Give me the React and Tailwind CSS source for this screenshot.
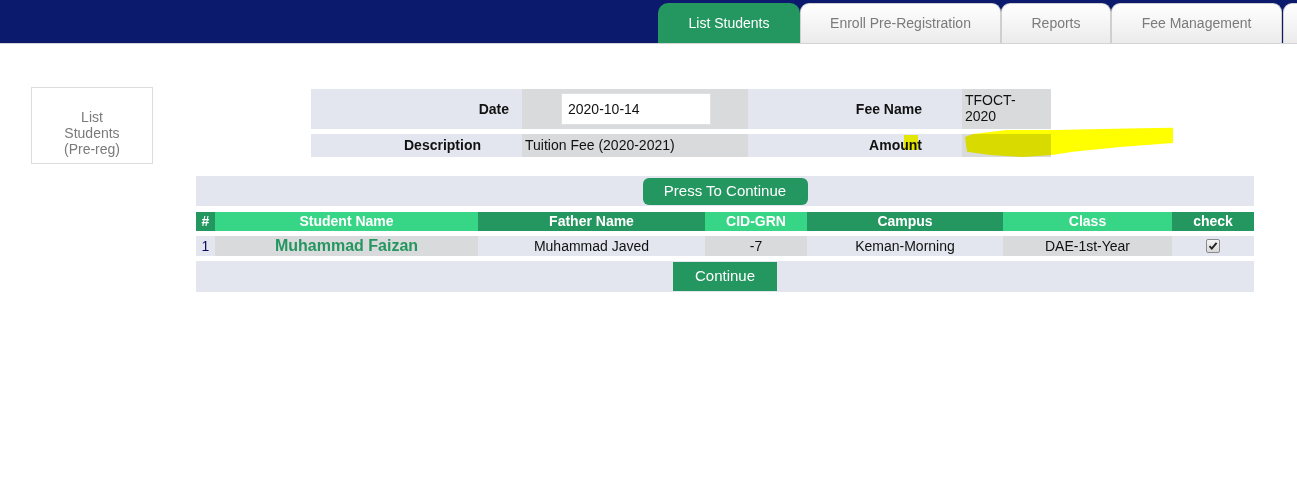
import React from "react";

const light = "bg-[#e3e6ee]";
const gray = "bg-[#d9dadb]";

function Tab({ children, active, w }) {
  if (active) {
    return (
      <div className={`${w} h-[40px] shrink-0 flex items-center justify-center rounded-t-[10px] bg-[#24965f] text-white text-[14px]`}>
        {children}
      </div>
    );
  }
  return (
    <div className={`${w} h-[40px] shrink-0 flex items-center justify-center rounded-t-[9px] border border-b-0 border-[#cfcfcf] bg-gradient-to-b from-white to-[#ebebeb] text-[#7b7b7b] text-[14px]`}>
      {children}
    </div>
  );
}

function CheckBox() {
  return (
    <span className="w-[14px] h-[14px] rounded-[2px] border border-[#8a8a8a] bg-gradient-to-b from-[#f4f4f4] to-[#d8d8d8] flex items-center justify-center">
      <svg width="10" height="10" viewBox="0 0 10 10">
        <path d="M1.5 5.2 L3.8 7.6 L8.6 1.8" fill="none" stroke="#222" strokeWidth="1.9" />
      </svg>
    </span>
  );
}

export default function App() {
  const cols = [
    { name: "#", w: "w-[19px]", head: "bg-[#24965f]", cell: light, val: "1", cls: "text-[#0a0a60]" },
    { name: "Student Name", w: "w-[263px]", head: "bg-[#37d586]", cell: gray, val: "Muhammad Faizan", cls: "font-bold text-[16px] text-[#24965f]" },
    { name: "Father Name", w: "w-[227px]", head: "bg-[#24965f]", cell: light, val: "Muhammad Javed", cls: "" },
    { name: "CID-GRN", w: "w-[102px]", head: "bg-[#37d586]", cell: gray, val: "-7", cls: "" },
    { name: "Campus", w: "w-[196px]", head: "bg-[#24965f]", cell: light, val: "Keman-Morning", cls: "" },
    { name: "Class", w: "w-[169px]", head: "bg-[#37d586]", cell: gray, val: "DAE-1st-Year", cls: "" },
    { name: "check", w: "w-[82px]", head: "bg-[#24965f]", cell: light, val: null, cls: "" },
  ];

  return (
    <div className="relative w-[1297px] h-[479px] overflow-hidden bg-white font-['Liberation_Sans',Arial,sans-serif] text-[#111]">
      {/* Header */}
      <div className="h-[44px] bg-[#0c1a6e] border-b border-[#d4d4d4] flex items-start pt-[3px] pl-[658px] overflow-hidden">
        <Tab active w="w-[142px]">List Students</Tab>
        <Tab w="w-[201px]">Enroll Pre-Registration</Tab>
        <Tab w="w-[110px]">Reports</Tab>
        <Tab w="w-[171px]">Fee Management</Tab>
        <div className="w-[1px] shrink-0" />
        <Tab w="w-[80px]">{""}</Tab>
      </div>

      {/* Body */}
      <div className="flex items-start">
        <div className="ml-[31px] mt-[43px] w-[122px] h-[77px] border border-[#dcdcdc] pt-[21px] text-center text-[14px] leading-[16px] text-[#7a7a7a] flex flex-col items-center shrink-0">
          <span>List</span>
          <span>Students</span>
          <span>(Pre-reg)</span>
        </div>

        <div className="ml-[43px] mt-[45px] w-[1058px] flex flex-col">
          {/* Form */}
          <div className="ml-[115px] grid grid-cols-[211px_226px_214px_89px] gap-y-[5px] text-[14px]">
            <div className={`${light} h-[40px] flex items-center justify-end pr-[13px] font-bold`}>Date</div>
            <div className={`${gray} h-[40px] flex items-center pl-[39px]`}>
              <input
                readOnly
                value="2020-10-14"
                className="w-[150px] h-[32px] bg-white border border-[#e0e0e0] pl-[6px] text-[14px] text-[#111] outline-none font-['Liberation_Sans',Arial,sans-serif]"
              />
            </div>
            <div className={`${light} h-[40px] flex items-center justify-end pr-[40px] font-bold`}>Fee Name</div>
            <div className={`${gray} h-[40px] pl-[3px] pt-[3px] leading-[16px] flex flex-col`}>
              <span>TFOCT-</span>
              <span>2020</span>
            </div>

            <div className={`${light} h-[23px] flex items-center justify-end pr-[41px] font-bold`}>Description</div>
            <div className={`${gray} h-[23px] flex items-center pl-[3px]`}>Tuition Fee (2020-2021)</div>
            <div className={`${light} h-[23px] flex items-center justify-end pr-[40px] font-bold`}>Amount</div>
            <div className={`${gray} h-[23px]`} />
          </div>

          {/* Lower table */}
          <div className="mt-[19px] flex flex-col text-[14px]">
            <div className={`${light} h-[30px] flex justify-center items-start pt-[2px]`}>
              <div className="w-[165px] h-[27px] rounded-[6px] bg-[#24965f] text-white text-[15px] flex items-center justify-center">
                Press To Continue
              </div>
            </div>

            <div className="mt-[6px] h-[19px] flex font-bold text-white">
              {cols.map((c) => (
                <div key={c.name} className={`${c.w} ${c.head} flex items-center justify-center`}>
                  {c.name}
                </div>
              ))}
            </div>

            <div className="mt-[5px] h-[20px] flex">
              {cols.map((c) => (
                <div key={c.name} className={`${c.w} ${c.cell} flex items-center justify-center ${c.cls}`}>
                  {c.val === null ? <CheckBox /> : c.val}
                </div>
              ))}
            </div>

            <div className={`mt-[5px] ${light} h-[31px] flex justify-center items-center`}>
              <div className="w-[104px] h-[29px] bg-[#24965f] text-white text-[15px] flex items-center justify-center">
                Continue
              </div>
            </div>
          </div>
        </div>
      </div>

      {/* Yellow highlighter marks */}
      <svg
        className="absolute left-0 top-0 pointer-events-none mix-blend-multiply"
        width="1297"
        height="479"
        viewBox="0 0 1297 479"
      >
        <polygon
          fill="#ffff00"
          points="965,137 973,134 1007,130 1057,130 1090,129.3 1140,128.3 1173,127.7 1173,143 1123,146.7 1073,151.7 1052,155 1023,157 990,155 967,151.7"
        />
        <rect x="904" y="135" width="14" height="15" fill="#ffff00" />
      </svg>
    </div>
  );
}
